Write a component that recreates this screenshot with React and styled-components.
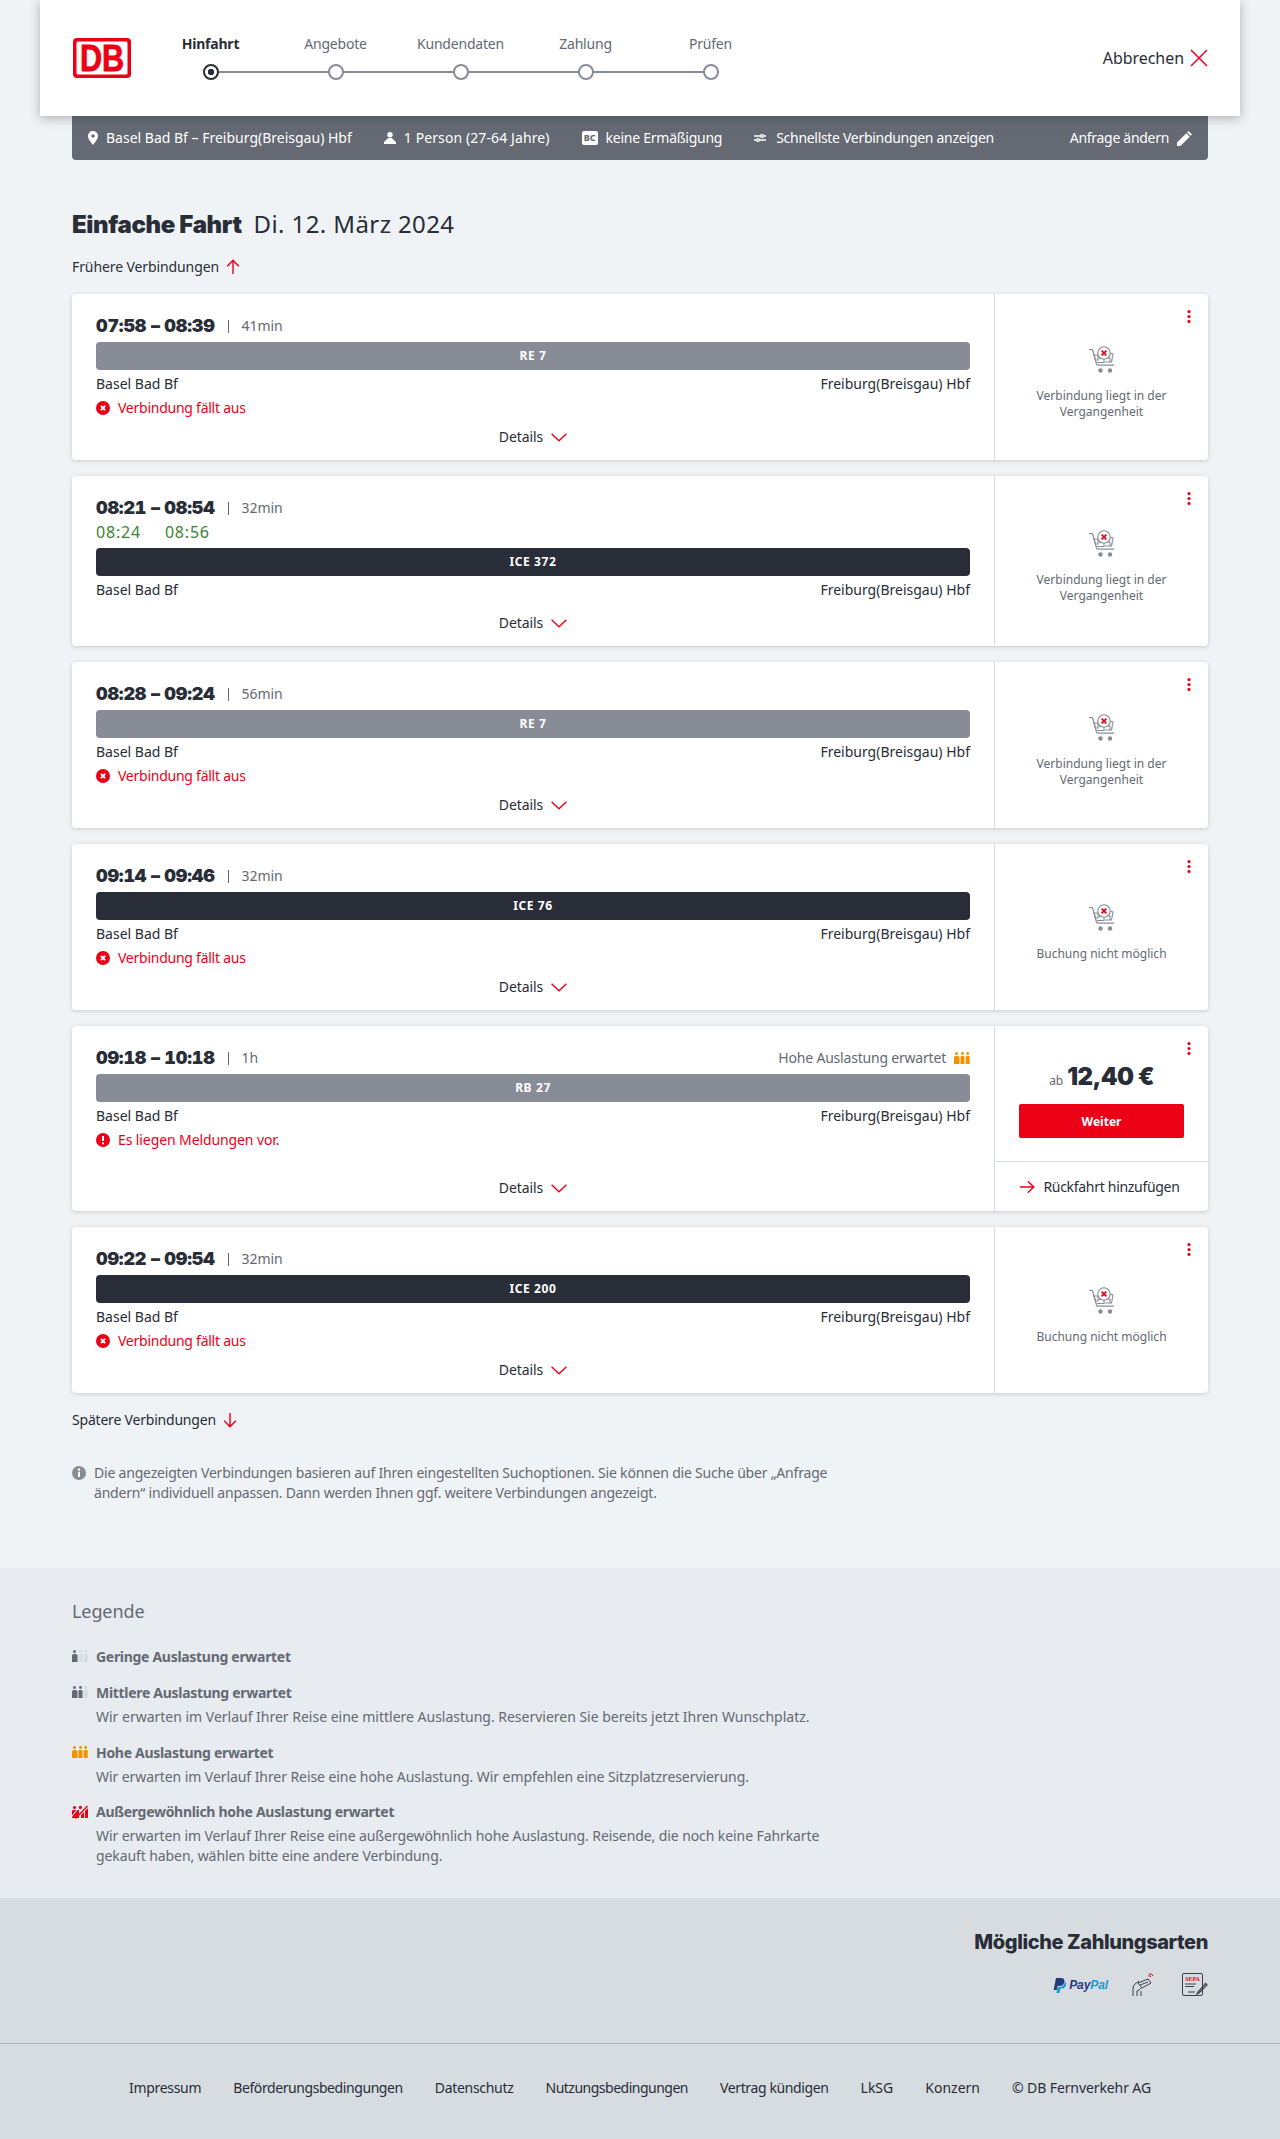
import React from "react";
import styled, { createGlobalStyle } from "styled-components";

const RED = "#ec0016";
const DARK = "#282d37";
const GREY = "#646973";
const MID = "#878c96";
const LINE = "#d7dce1";

const GlobalStyle = createGlobalStyle`
  html, body { margin: 0; padding: 0; }
  body {
    background: #f0f3f5;
    color: ${DARK};
    font-family: "Noto Sans", "Liberation Sans", sans-serif;
    font-size: 14px;
    line-height: 20px;
    letter-spacing: -0.1px;
  }
  svg { display: block; flex: none; }
`;

const connections = [
  { from: "07:58", to: "08:39", dur: "41min", train: "RE 7", regional: true, alert: "Verbindung fällt aus", note: ["Verbindung liegt in der", "Vergangenheit"], height: 166 },
  { from: "08:21", to: "08:54", dur: "32min", train: "ICE 372", delay: ["08:24", "08:56"], note: ["Verbindung liegt in der", "Vergangenheit"], height: 170 },
  { from: "08:28", to: "09:24", dur: "56min", train: "RE 7", regional: true, alert: "Verbindung fällt aus", note: ["Verbindung liegt in der", "Vergangenheit"], height: 166 },
  { from: "09:14", to: "09:46", dur: "32min", train: "ICE 76", alert: "Verbindung fällt aus", note: ["Buchung nicht möglich"], height: 166 },
  { from: "09:18", to: "10:18", dur: "1h", train: "RB 27", regional: true, alert: "Es liegen Meldungen vor.", warn: true, load: true, price: "12,40 €", height: 185 },
  { from: "09:22", to: "09:54", dur: "32min", train: "ICE 200", alert: "Verbindung fällt aus", note: ["Buchung nicht möglich"], height: 166 },
];

const steps = ["Hinfahrt", "Angebote", "Kundendaten", "Zahlung", "Prüfen"];
const footerLinks = [
  { label: "Impressum", ls: -0.3 },
  { label: "Beförderungsbedingungen", ls: -0.42 },
  { label: "Datenschutz", ls: -0.3 },
  { label: "Nutzungsbedingungen", ls: -0.5 },
  { label: "Vertrag kündigen", ls: -0.38 },
  { label: "LkSG", ls: 0 },
  { label: "Konzern", ls: 0 },
  { label: "© DB Fernverkehr AG", ls: -0.1 },
];

function DbLogo() {
  return (
    <svg width="58" height="40" viewBox="0 0 58 40">
      <rect width="58" height="40" rx="4" fill={RED} />
      <rect x="3.5" y="3.5" width="51" height="33" rx="1.5" fill="#fff" />
      <text x="29" y="33" textAnchor="middle" fontFamily="Liberation Sans" fontWeight="700" fontSize="36" fill={RED} stroke={RED} strokeWidth="0.8" textLength="44" lengthAdjust="spacingAndGlyphs">DB</text>
    </svg>
  );
}

function Arrow({ dir }) {
  const rot = { up: 0, down: 180, right: 90 }[dir];
  return (
    <svg width="16" height="16" viewBox="0 0 16 16" fill="none" stroke={RED} strokeWidth="1.4" style={{ transform: `rotate(${rot}deg)` }}>
      <path d="M8 15V1.5M2.2 7.2 8 1.2l5.8 6" />
    </svg>
  );
}

function Chevron() {
  return (
    <svg width="16" height="9" viewBox="0 0 16 9" fill="none" stroke={RED} strokeWidth="1.4">
      <path d="M.6.8 8 7.8 15.4.8" />
    </svg>
  );
}

function AlertIcon({ warn }) {
  return (
    <svg width="14" height="14" viewBox="0 0 14 14">
      <circle cx="7" cy="7" r="7" fill={RED} />
      {warn ? (
        <path d="M7 3v5M7 9.6v1.6" stroke="#fff" strokeWidth="2" />
      ) : (
        <path d="M4.9 4.9l4.2 4.2M9.1 4.9 4.9 9.1" stroke="#fff" strokeWidth="2" />
      )}
    </svg>
  );
}

function Occupancy({ level }) {
  const map = {
    1: [GREY, "#d7dce1", "#d7dce1"],
    2: [GREY, GREY, "#d7dce1"],
    3: ["#f39200", "#f39200", "#f39200"],
  };
  if (level === 4) {
    return (
      <svg width="16" height="14" viewBox="0 0 16 14" fill={RED}>
        <circle cx="2.5" cy="2.5" r="1.6" />
        <path d="M0 6.2Q0 5 1.2 5h3l-2 2.6v0L0 10.6ZM0 13v-1l5.6-7H7v8Z" />
        <circle cx="8.4" cy="2.4" r="1.6" />
        <path d="M15 .5 16 1.5 4 14 3 13Z" />
        <path d="M9 13v-3l3-3v6ZM13 13V6l3-3v10Z" />
      </svg>
    );
  }
  const cols = map[level];
  return (
    <svg width="16" height="12" viewBox="0 0 16 12">
      <circle cx="2.5" cy="1.5" r="1.5" fill={cols[0]} />
      <path d="M0 5.5Q0 4 1.5 4h2Q5.5 4 5.500 5.500V12H0Z" fill={cols[0]} />
      <circle cx="8.5" cy="1.5" r="1.4" fill={cols[1]} />
      <path d="M6.500 5Q6.500 4 7.500 4h2q1 0 1 1v7h-4Z" fill={cols[1]} />
      <circle cx="13.7" cy="1.5" r="1.4" fill={cols[2]} />
      <path d="M11.700 5q0-1 1-1h2q1 0 1 1v7h-4Z" fill={cols[2]} />
    </svg>
  );
}

function CartIcon() {
  return (
    <svg width="26" height="28" viewBox="0 0 26 28" fill="none" stroke={MID} strokeWidth="1.1">
      <path d="M0 3.500h3.500l4 14.500q.4 1.200 1.600 1.200H25" strokeWidth="1.2" />
      <path d="M5 9h4v5H6.500zM10 12.500h5v4h-7M16 12h5v4h-5M20 7l4 1-1.500 8h-1.500" />
      <circle cx="15" cy="7" r="6.200" fill="#fff" />
      <path d="M12.600 4.600l4.800 4.800M17.400 4.600l-4.800 4.800" stroke={RED} strokeWidth="1.7" />
      <circle cx="11.500" cy="24.500" r="2.200" fill={MID} stroke="none" />
      <circle cx="21" cy="24.500" r="2.200" fill={MID} stroke="none" />
    </svg>
  );
}

function MoreDots() {
  return (
    <svg width="4" height="13" viewBox="0 0 4 13" fill={RED}>
      <circle cx="2" cy="1.6" r="1.6" />
      <circle cx="2" cy="6.5" r="1.6" />
      <circle cx="2" cy="11.4" r="1.6" />
    </svg>
  );
}

function PayPalMark() {
  return (
    <svg width="13" height="15" viewBox="0 0 13 15">
      <path d="M3 0h5q4 .2 3.400 3.800Q10.700 8 6.500 8H4.500L3.700 12H.6Z" fill="#253b80" />
      <path d="M11.900 3.600Q13.800 5 12.800 7.800 11.800 10.600 8.600 10.600H7.300L6.500 15H3.500L4.500 9H7Q11.300 8.800 11.900 3.600Z" fill="#179bd7" />
    </svg>
  );
}

function ContactlessIcon() {
  return (
    <svg width="22" height="24" viewBox="0 0 22 24" fill="none" stroke="#3c414b" strokeWidth="1">
      <path d="M6 10l10-4 3 4-9 5zM8 12l8-3" />
      <path d="M1 23v-8q0-2 2-4l4-3M5 23v-5q3-1 5-4M9 23v-5" />
      <path d="M16 3q2-1 3 1M17 1q3-1 4 2" stroke={RED} />
    </svg>
  );
}

function SepaIcon() {
  return (
    <svg width="26" height="24" viewBox="0 0 26 24" fill="none" stroke="#3c414b" strokeWidth="1">
      <rect x=".5" y=".5" width="20" height="22" rx="1.500" />
      <text x="10.500" y="8" textAnchor="middle" fontFamily="Liberation Serif" fontWeight="700" fontSize="6" fill={RED} stroke="none">SEPA</text>
      <path d="M3 11h11M3 13.500h9M6 19h7" />
      <path d="M16 19l-1 2 2-1 8-8-1.500-1.500z" strokeWidth="1.200" />
    </svg>
  );
}

export default function App() {
  return (
    <>
      <GlobalStyle />
      <Header>
        <DbLogo />
        <Steps>
          {steps.map((s, i) => (
            <Step key={s} $last={i === steps.length - 1}>
              <StepLabel $active={i === 0}>{s}</StepLabel>
              <StepDot $active={i === 0} />
            </Step>
          ))}
        </Steps>
        <Cancel>
          Abbrechen
          <svg width="18" height="18" viewBox="0 0 18 18" fill="none" stroke={RED} strokeWidth="1.500">
            <path d="M1 1l16 16M17 1 1 17" />
          </svg>
        </Cancel>
      </Header>

      <Main>
        <SearchBar>
          <SearchItem $ls={0}>
            <svg width="10" height="14" viewBox="0 0 10 14" fill="#fff">
              <path d="M5 0a5 5 0 0 1 5 5c0 3-3 6.500-5 9-2-2.500-5-6-5-9a5 5 0 0 1 5-5Zm0 3.200a1.800 1.800 0 1 0 0 3.600 1.800 1.800 0 0 0 0-3.600Z" fillRule="evenodd" />
            </svg>
            Basel Bad Bf – Freiburg(Breisgau) Hbf
          </SearchItem>
          <SearchItem $ls={0.1}>
            <svg width="12" height="12" viewBox="0 0 12 12" fill="#fff">
              <circle cx="6" cy="2.700" r="2.700" />
              <path d="M4.300 6h3.400L12 10v2H0v-2Z" />
            </svg>
            1 Person (27-64 Jahre)
          </SearchItem>
          <SearchItem $gap={8} $ls={-0.25}>
            <BcBadge>BC</BcBadge>
            keine Ermäßigung
          </SearchItem>
          <SearchItem $gap={10} $ls={-0.3}>
            <svg width="12" height="10" viewBox="0 0 12 10" fill="none" stroke="#fff" strokeWidth="1.400">
              <path d="M0 3h12M0 7h12" />
              <circle cx="8" cy="3" r="1.400" fill="#646973" />
              <circle cx="4" cy="7" r="1.400" fill="#646973" />
            </svg>
            Schnellste Verbindungen anzeigen
          </SearchItem>
          <ChangeLink $ls={-0.3}>
            Anfrage ändern
            <svg width="15" height="15" viewBox="0 0 15 15" fill="#fff">
              <path d="M0 15v-3.400L9.300 2.300l3.400 3.400L3.400 15ZM10.200 1.400 11.500 0 15 3.500l-1.400 1.300Z" />
            </svg>
          </ChangeLink>
        </SearchBar>

        <Title>
          <strong>Einfache Fahrt</strong>
          <span>Di. 12. März 2024</span>
        </Title>

        <Paging $top={16}>
          Frühere Verbindungen <Arrow dir="up" />
        </Paging>

        <CardList>
          {connections.map((c) => (
            <Card key={c.from} $height={c.height}>
              <CardMain>
                <TimeRow>
                  <Times>{c.from} – {c.to}</Times>
                  <Separator />
                  <Duration>{c.dur}</Duration>
                  {c.load && (
                    <LoadHint>
                      Hohe Auslastung erwartet
                      <Occupancy level={3} />
                    </LoadHint>
                  )}
                </TimeRow>
                {c.delay && (
                  <DelayRow>
                    <span>{c.delay[0]}</span>
                    <span>{c.delay[1]}</span>
                  </DelayRow>
                )}
                <TrainBar $regional={c.regional}>{c.train}</TrainBar>
                <Stations>
                  <span>Basel Bad Bf</span>
                  <span>Freiburg(Breisgau) Hbf</span>
                </Stations>
                {c.alert && (
                  <AlertRow $warn={c.warn}>
                    <AlertIcon warn={c.warn} />
                    {c.alert}
                  </AlertRow>
                )}
                <DetailsRow>
                  Details <Chevron />
                </DetailsRow>
              </CardMain>
              <CardSide>
                <Dots><MoreDots /></Dots>
                {c.price ? (
                  <>
                    <Offer>
                      <Price><small>ab</small>{c.price}</Price>
                      <PrimaryButton>Weiter</PrimaryButton>
                    </Offer>
                    <ReturnRow>
                      <Arrow dir="right" />
                      Rückfahrt hinzufügen
                    </ReturnRow>
                  </>
                ) : (
                  <Unavailable>
                    <CartIcon />
                    <p>
                      {c.note.map((line) => (
                        <span key={line}>{line}</span>
                      ))}
                    </p>
                  </Unavailable>
                )}
              </CardSide>
            </Card>
          ))}
        </CardList>

        <Paging $top={17} $ls={-0.2}>
          Spätere Verbindungen <Arrow dir="down" />
        </Paging>

        <Info>
          <svg width="14" height="14" viewBox="0 0 14 14">
            <circle cx="7" cy="7" r="7" fill={MID} />
            <path d="M7 5.800V11" stroke="#fff" strokeWidth="2" />
            <circle cx="7" cy="3.500" r="1.200" fill="#fff" />
          </svg>
          <p>
            Die angezeigten Verbindungen basieren auf Ihren eingestellten Suchoptionen. Sie können die Suche über „Anfrage
            <br />
            ändern“ individuell anpassen. Dann werden Ihnen ggf. weitere Verbindungen angezeigt.
          </p>
        </Info>
      </Main>

      <Legend>
        <LegendInner>
          <LegendTitle>Legende</LegendTitle>
          <LegendList>
            <LegendItem>
              <Occupancy level={1} />
              <div><b>Geringe Auslastung erwartet</b></div>
            </LegendItem>
            <LegendItem>
              <Occupancy level={2} />
              <div>
                <b>Mittlere Auslastung erwartet</b>
                <LegendText $ls={-0.01}>Wir erwarten im Verlauf Ihrer Reise eine mittlere Auslastung. Reservieren Sie bereits jetzt Ihren Wunschplatz.</LegendText>
              </div>
            </LegendItem>
            <LegendItem>
              <Occupancy level={3} />
              <div>
                <b>Hohe Auslastung erwartet</b>
                <LegendText $ls={-0.07}>Wir erwarten im Verlauf Ihrer Reise eine hohe Auslastung. Wir empfehlen eine Sitzplatzreservierung.</LegendText>
              </div>
            </LegendItem>
            <LegendItem>
              <Occupancy level={4} />
              <div>
                <b>Außergewöhnlich hohe Auslastung erwartet</b>
                <LegendText $ls={-0.09}>
                  Wir erwarten im Verlauf Ihrer Reise eine außergewöhnlich hohe Auslastung. Reisende, die noch keine Fahrkarte
                  <br />
                  gekauft haben, wählen bitte eine andere Verbindung.
                </LegendText>
              </div>
            </LegendItem>
          </LegendList>
        </LegendInner>
      </Legend>

      <Payment>
        <PaymentTitle>Mögliche Zahlungsarten</PaymentTitle>
        <PaymentIcons>
          <PayPal>
            <PayPalMark />
            <span>Pay<i>Pal</i></span>
          </PayPal>
          <ContactlessIcon />
          <SepaIcon />
        </PaymentIcons>
      </Payment>

      <Footer>
        {footerLinks.map((l) => (
          <FooterLink key={l.label} $ls={l.ls}>{l.label}</FooterLink>
        ))}
      </Footer>
    </>
  );
}

const Header = styled.header`
  position: relative;
  z-index: 2;
  box-sizing: border-box;
  width: 1200px;
  height: 116px;
  margin: 0 auto;
  padding: 0 32px 0 33px;
  display: flex;
  align-items: center;
  background: #fff;
  box-shadow: 0 2px 10px rgba(40, 45, 55, 0.35);
`;

const Steps = styled.div`
  display: flex;
  margin: -2px 0 0 17px;
`;

const Step = styled.div`
  position: relative;
  width: 125px;
  display: flex;
  flex-direction: column;
  align-items: center;

  &::after {
    content: "";
    display: ${(p) => (p.$last ? "none" : "block")};
    position: absolute;
    left: 62px;
    top: 37px;
    width: 125px;
    height: 2px;
    background: ${MID};
  }
`;

const StepLabel = styled.div`
  height: 20px;
  margin-bottom: 10px;
  font-size: 14px;
  letter-spacing: -0.2px;
  font-weight: ${(p) => (p.$active ? 700 : 400)};
  color: ${(p) => (p.$active ? DARK : GREY)};
`;

const StepDot = styled.div`
  position: relative;
  z-index: 1;
  box-sizing: border-box;
  width: 16px;
  height: 16px;
  border-radius: 50%;
  background: ${(p) => (p.$active ? `radial-gradient(circle, ${DARK} 0 3px, #fff 3.5px)` : "#fff")};
  border: 2px solid ${(p) => (p.$active ? DARK : MID)};
`;

const Cancel = styled.div`
  margin-left: auto;
  display: flex;
  align-items: center;
  gap: 6px;
  font-size: 16px;
  letter-spacing: -0.05px;
`;

const Main = styled.main`
  width: 1136px;
  margin: 0 auto;
  padding-bottom: 65px;
`;

const SearchBar = styled.div`
  box-sizing: border-box;
  height: 44px;
  padding: 0 16px;
  display: flex;
  align-items: center;
  gap: 32px;
  background: ${GREY};
  border-radius: 0 0 4px 4px;
  color: #fff;
`;

const SearchItem = styled.div`
  display: flex;
  align-items: center;
  gap: ${(p) => p.$gap || 8}px;
  letter-spacing: ${(p) => p.$ls}px;
`;

const BcBadge = styled.span`
  box-sizing: border-box;
  width: 16px;
  height: 14px;
  background: #fff;
  border-radius: 2px;
  color: ${GREY};
  font-size: 9px;
  font-weight: 800;
  line-height: 14px;
  text-align: center;
  letter-spacing: 0;
`;

const ChangeLink = styled(SearchItem)`
  margin-left: auto;
`;

const Title = styled.h1`
  margin: 48px 0 0;
  display: flex;
  align-items: baseline;
  gap: 12px;
  font-size: 24px;
  line-height: 32px;
  font-weight: 400;
  letter-spacing: 0.4px;

  strong {
    font-family: "Inter", sans-serif;
    font-weight: 900;
    letter-spacing: -0.38px;
  }
`;

const Paging = styled.div`
  margin-top: ${(p) => p.$top}px;
  display: flex;
  align-items: center;
  gap: 6px;
  letter-spacing: ${(p) => p.$ls ?? -0.1}px;
`;

const CardList = styled.div`
  margin-top: 17px;
  display: flex;
  flex-direction: column;
  gap: 16px;
`;

const Card = styled.article`
  display: flex;
  height: ${(p) => p.$height}px;
  background: #fff;
  border-radius: 4px;
  box-shadow: 0 1px 4px rgba(40, 45, 55, 0.2);
`;

const CardMain = styled.div`
  box-sizing: border-box;
  width: 922px;
  padding: 20px 24px 0;
  display: flex;
  flex-direction: column;
`;

const TimeRow = styled.div`
  height: 24px;
  display: flex;
  align-items: center;
`;

const Times = styled.div`
  font-family: "Inter", sans-serif;
  font-size: 18px;
  font-weight: 900;
  font-variant-numeric: tabular-nums;
  letter-spacing: -0.2px;
`;

const Separator = styled.div`
  width: 1px;
  height: 13px;
  margin: 0 13px;
  background: ${GREY};
`;

const Duration = styled.div`
  color: ${GREY};
`;

const LoadHint = styled.div`
  margin-left: auto;
  display: flex;
  align-items: center;
  gap: 8px;
  color: ${GREY};
  letter-spacing: -0.2px;
`;

const DelayRow = styled.div`
  height: 24px;
  display: flex;
  gap: 24px;
  font-size: 16px;
  line-height: 24px;
  letter-spacing: 0.8px;
  color: #408335;
`;

const TrainBar = styled.div`
  height: 28px;
  margin-top: 4px;
  border-radius: 4px;
  background: ${(p) => (p.$regional ? MID : DARK)};
  color: #fff;
  font-size: 12px;
  font-weight: 700;
  letter-spacing: 0.6px;
  line-height: 28px;
  text-align: center;
`;

const Stations = styled.div`
  margin-top: 4px;
  display: flex;
  justify-content: space-between;
  letter-spacing: 0;
`;

const AlertRow = styled.div`
  margin-top: 4px;
  display: flex;
  align-items: center;
  gap: 8px;
  color: ${RED};
  letter-spacing: ${(p) => (p.$warn ? -0.1 : -0.25)}px;
`;

const DetailsRow = styled.div`
  margin-top: auto;
  padding-bottom: 13px;
  display: flex;
  justify-content: center;
  align-items: center;
  gap: 8px;
`;

const CardSide = styled.div`
  position: relative;
  flex: 1;
  display: flex;
  flex-direction: column;
  border-left: 1px solid ${LINE};
`;

const Dots = styled.div`
  position: absolute;
  top: 16px;
  right: 17px;
`;

const Unavailable = styled.div`
  flex: 1;
  padding-top: 12px;
  display: flex;
  flex-direction: column;
  justify-content: center;
  align-items: center;
  gap: 14px;
  color: ${GREY};
  font-size: 12px;
  line-height: 16px;
  letter-spacing: 0;

  p {
    margin: 0;
    text-align: center;
  }
  span {
    display: block;
  }
`;

const Offer = styled.div`
  flex: 1;
  padding-top: 35px;
  display: flex;
  flex-direction: column;
  align-items: center;
  border-bottom: 1px solid ${LINE};
`;

const Price = styled.div`
  height: 32px;
  display: flex;
  align-items: baseline;
  gap: 4px;
  font-family: "Inter", sans-serif;
  font-size: 24px;
  line-height: 32px;
  font-weight: 900;
  letter-spacing: -0.6px;

  small {
    font-family: "Noto Sans", sans-serif;
    font-size: 12px;
    font-weight: 400;
    letter-spacing: 0;
    color: ${GREY};
  }
`;

const PrimaryButton = styled.button`
  width: 165px;
  height: 34px;
  margin-top: 11px;
  padding: 0;
  border: 0;
  border-radius: 2px;
  background: ${RED};
  color: #fff;
  font-family: "Noto Sans", sans-serif;
  font-size: 12px;
  font-weight: 700;
`;

const ReturnRow = styled.div`
  height: 49px;
  padding-right: 4px;
  display: flex;
  align-items: center;
  justify-content: center;
  gap: 8px;
  letter-spacing: -0.3px;
`;

const Info = styled.div`
  margin-top: 33px;
  display: flex;
  gap: 8px;
  color: ${GREY};
  letter-spacing: -0.2px;

  svg {
    margin-top: 3px;
  }
  p {
    margin: 0;
  }
`;

const Legend = styled.section`
  background: #e8ebef;
`;

const LegendInner = styled.div`
  box-sizing: border-box;
  width: 1136px;
  margin: 0 auto;
  padding: 31px 0 32px;
  color: ${GREY};
`;

const LegendTitle = styled.h2`
  margin: 0;
  font-size: 18px;
  line-height: 24px;
  font-weight: 400;
`;

const LegendList = styled.div`
  margin-top: 24px;
  display: flex;
  flex-direction: column;
  gap: 16px;

  > div:last-child {
    margin-top: -1px;
  }
`;

const LegendItem = styled.div`
  display: flex;
  gap: 8px;

  svg {
    margin-top: 3px;
  }
  b {
    display: block;
    font-weight: 700;
    letter-spacing: -0.3px;
  }
`;

const LegendText = styled.p`
  margin: 4px 0 0;
  letter-spacing: ${(p) => p.$ls}px;
`;

const Payment = styled.section`
  box-sizing: border-box;
  height: 146px;
  padding: 30px 72px 0;
  background: ${LINE};
  border-bottom: 1px solid #afb4bb;
`;

const PaymentTitle = styled.h2`
  margin: 0;
  font-family: "Inter", sans-serif;
  font-size: 20px;
  line-height: 28px;
  font-weight: 800;
  letter-spacing: -0.4px;
  text-align: right;
`;

const PaymentIcons = styled.div`
  height: 30px;
  margin-top: 14px;
  display: flex;
  justify-content: flex-end;
  align-items: center;
  gap: 28px;
`;

const PayPal = styled.div`
  display: flex;
  align-items: center;
  gap: 3px;
  margin-right: -4px;
  font-family: "Liberation Sans", sans-serif;
  font-size: 12px;
  font-weight: 700;
  font-style: italic;
  color: #253b80;

  i {
    color: #179bd7;
  }
`;

const Footer = styled.footer`
  box-sizing: border-box;
  min-height: 96px;
  padding-top: 34px;
  display: flex;
  justify-content: center;
  gap: 32px;
  background: ${LINE};
`;

const FooterLink = styled.span`
  letter-spacing: ${(p) => p.$ls}px;
`;
